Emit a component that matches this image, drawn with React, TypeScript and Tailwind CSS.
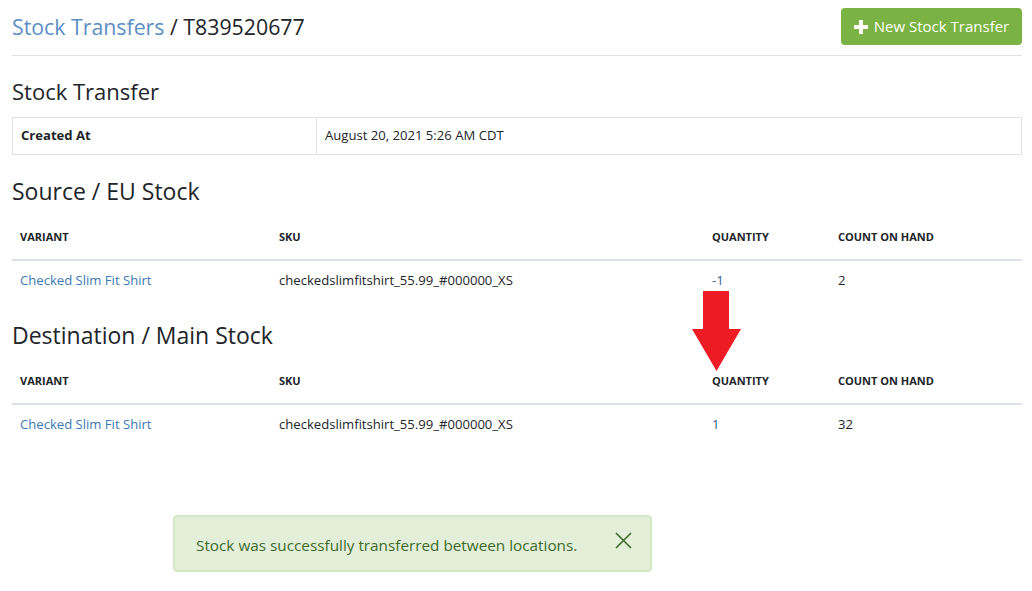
import React from 'react';

const font = { fontFamily: '"Open Sans", "Noto Sans", sans-serif' };

interface Row {
  variant: string;
  sku: string;
  quantity: string;
  onHand: string;
}

function StockTable({ title, rows }: { title: string; rows: Row[] }) {
  return (
    <div>
      <h2 className="pt-[22px] text-[23px] leading-[28px] text-[#212529]">{title}</h2>
      <div className="grid grid-cols-[259px_433px_126px_1fr] border-b-2 border-[#dee2e6] text-[11px] font-bold uppercase text-[#212529]">
        {['Variant', 'SKU', 'Quantity', 'Count on hand'].map((h) => (
          <div key={h} className="px-2 pt-[24px] pb-[14px] leading-[16px]">
            {h}
          </div>
        ))}
      </div>
      {rows.map((r) => (
        <div key={r.sku} className="grid grid-cols-[259px_433px_126px_1fr] text-[13.1px] leading-[20px]">
          <div className="px-2 py-[9px] text-[#3a78b5]">{r.variant}</div>
          <div className="px-2 py-[9px] text-[#212529]">{r.sku}</div>
          <div className="px-2 py-[9px] text-[#2f5f8f]">{r.quantity}</div>
          <div className="px-2 py-[9px] text-[#212529]">{r.onHand}</div>
        </div>
      ))}
    </div>
  );
}

export default function App() {
  return (
    <div className="relative h-[591px] w-[1032px] overflow-hidden bg-white pl-[12px] pr-[10px]" style={font}>
      <div className="flex h-[56px] items-center justify-between border-b border-[#dee2e6]">
        <h1 className="mt-[-2px] text-[21.3px] leading-[28px] text-[#212529]">
          <span className="text-[#5b8fc4]">Stock Transfers</span> / T839520677
        </h1>
        <button className="mt-[-2px] flex h-[37px] w-[181px] items-center justify-center gap-[6px] rounded-[4px] bg-[#7ab343] text-[15px] text-white">
          <svg width="14" height="14" viewBox="0 0 14 14">
            <path d="M5 0h4v5h5v4H9v5H5V9H0V5h5z" fill="white" />
          </svg>
          New Stock Transfer
        </button>
      </div>

      <h2 className="pt-[21px] text-[22px] leading-[28px] text-[#212529]">Stock Transfer</h2>
      <div className="mt-[12px] grid grid-cols-[304px_1fr] border border-[#dee2e6] text-[13.1px] text-[#212529]">
        <div className="flex h-[36px] items-center border-r border-[#dee2e6] px-2 font-bold">Created At</div>
        <div className="flex h-[36px] items-center px-2">August 20, 2021 5:26 AM CDT</div>
      </div>

      <StockTable
        title="Source / EU Stock"
        rows={[{ variant: 'Checked Slim Fit Shirt', sku: 'checkedslimfitshirt_55.99_#000000_XS', quantity: '-1', onHand: '2' }]}
      />
      <StockTable
        title="Destination / Main Stock"
        rows={[{ variant: 'Checked Slim Fit Shirt', sku: 'checkedslimfitshirt_55.99_#000000_XS', quantity: '1', onHand: '32' }]}
      />

      {/* annotation arrow */}
      <svg className="absolute left-[692px] top-[291px]" width="49" height="81" viewBox="0 0 49 81">
        <path d="M11 0h26v38h12L24.5 80 0 38h11z" fill="#ed1c24" />
      </svg>

      {/* toast */}
      <div className="absolute left-[173px] top-[515px] flex h-[57px] w-[479px] items-center justify-between rounded-[4px] border-2 border-[#d5e8c6] bg-[#e3efd9] pl-[21px] pr-[18px] pt-[3px] text-[15.3px] text-[#3e6b2c]">
        <span>Stock was successfully transferred between locations.</span>
        <svg width="17" height="17" viewBox="0 0 17 17" className="mt-[-10px]">
          <path d="M1 1l15 15M16 1L1 16" stroke="#3e6b2c" strokeWidth="1.6" />
        </svg>
      </div>
    </div>
  );
}
